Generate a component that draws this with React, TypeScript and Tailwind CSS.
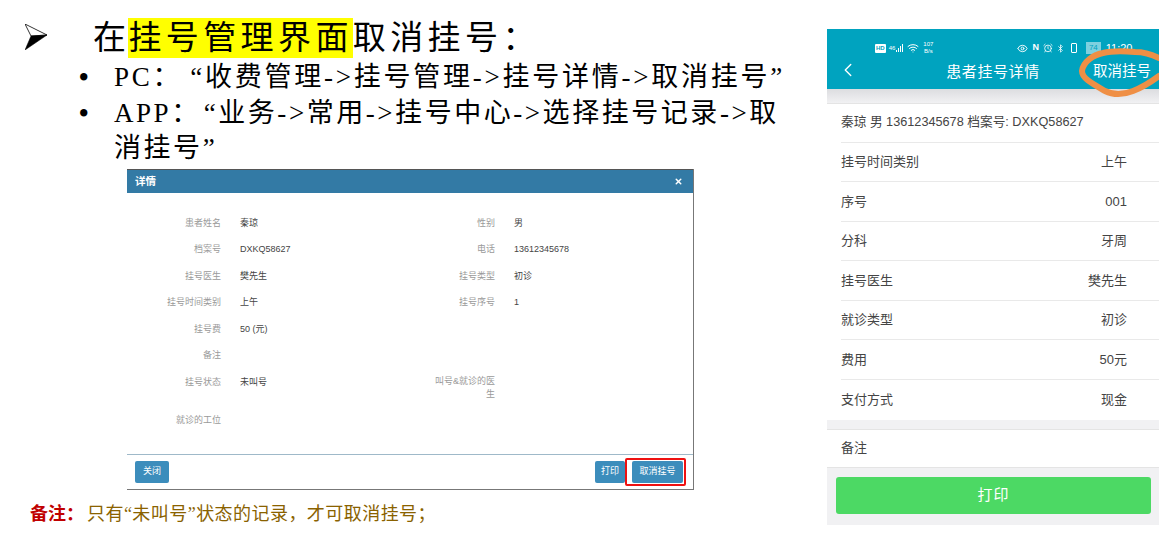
import React from 'react';
import { ChevronLeft, Wifi, Eye, AlarmClock, Bluetooth, X } from 'lucide-react';

const cjk = "font-['Liberation_Serif','Noto_Sans_CJK_SC',serif]";

const leftRows = [
  ['患者姓名', '秦琼'],
  ['档案号', 'DXKQ58627'],
  ['挂号医生', '樊先生'],
  ['挂号时间类别', '上午'],
  ['挂号费', '50 (元)'],
  ['备注', ''],
  ['挂号状态', '未叫号'],
  ['就诊的工位', ''],
];

const rightRows = [
  ['性别', '男'],
  ['电话', '13612345678'],
  ['挂号类型', '初诊'],
  ['挂号序号', '1'],
];

const phoneRows = [
  ['挂号时间类别', '上午'],
  ['序号', '001'],
  ['分科', '牙周'],
  ['挂号医生', '樊先生'],
  ['就诊类型', '初诊'],
  ['费用', '50元'],
  ['支付方式', '现金'],
];

const DialogRow = ({ label, value }: { label: string; value: string }) => (
  <div className="flex h-[26.5px] items-center">
    <div className="w-[94px] text-right text-[#9a9a9a]">{label}</div>
    <div className="ml-[19px] text-[#444]">{value}</div>
  </div>
);

const App = () => {
  return (
    <div className="relative flex h-[536px] w-[1159px] overflow-hidden bg-white font-['Liberation_Sans','Noto_Sans_CJK_SC',sans-serif]">
      {/* Slide text and desktop dialog */}
      <div className="w-[827px] shrink-0">
        <div className={`flex h-[58px] items-end pl-[25px] text-[33px] leading-[40px] tracking-[4.4px] text-black ${cjk}`}>
          <svg width="22" height="26" viewBox="0 0 22 26" className="mb-[8px] shrink-0">
            <path d="M0 0 L22 11 L6 12 Z" fill="#fff" stroke="#000" strokeWidth="0.8" />
            <path d="M0 26 L6 12 L22 11 Z" fill="#000" stroke="#000" strokeWidth="0.5" />
          </svg>
          <span className="ml-[46px] tracking-[2.4px]">在</span>
          <span className="bg-[#ffff00]">挂号管理界面</span>
          <span>取消挂号：</span>
        </div>

        <ul className={`ml-[79px] mt-[2px] w-[705px] text-[27px] leading-[35.5px] text-black ${cjk}`}>
          <li className="flex">
            <span className="w-[35px] shrink-0 font-bold">•</span>
            <span className="whitespace-nowrap tracking-[2.75px]"><span className="pr-[8px]">PC：</span>“收费管理-&gt;挂号管理-&gt;挂号详情-&gt;取消挂号”</span>
          </li>
          <li className="flex">
            <span className="w-[35px] shrink-0 font-bold">•</span>
            <div className="whitespace-nowrap tracking-[2.55px]">
              <div><span className="pr-[3px]">APP：</span>“业务-&gt;常用-&gt;挂号中心-&gt;选择挂号记录-&gt;取</div>
              <div>消挂号”</div>
            </div>
          </li>
        </ul>

        <div className="ml-[127px] mt-[2.5px] flex h-[321px] w-[567px] flex-col border-r border-b border-[#777] text-[9px]">
          <div className="flex h-[24px] items-center justify-between border-t border-[#555] bg-[#337aa5] pl-[8px] pr-[10px] text-[10.5px] font-bold text-white">
            <span>详情</span>
            <X size={9} strokeWidth={4} />
          </div>

          <div className="flex flex-1 pt-[17px]">
            <div className="w-[274px]">
              {leftRows.slice(0, 7).map(([label, value]) => (
                <DialogRow key={label} label={label} value={value} />
              ))}
              <div className="mt-[12px]">
                <DialogRow label={leftRows[7][0]} value={leftRows[7][1]} />
              </div>
            </div>
            <div className="flex-1">
              {rightRows.map(([label, value]) => (
                <DialogRow key={label} label={label} value={value} />
              ))}
              <div className="ml-[29px] mt-[59px] w-[65px] text-right leading-[13px] text-[#9a9a9a]">叫号&amp;就诊的医生</div>
            </div>
          </div>

          <div className="flex h-[35px] items-center justify-between border-t border-[#9fb9c9] pl-[8px] pr-[7px] text-white">
            <button className="h-[22px] w-[34px] rounded-[2px] bg-[#3c8dbc]">关闭</button>
            <div className="flex items-center">
              <button className="h-[22px] w-[30px] rounded-[2px] bg-[#3c8dbc]">打印</button>
              <div className="rounded-[2px] border-2 border-[#ee1111] py-[1px] pl-[5px] pr-[1px]">
                <button className="block h-[22px] w-[51px] rounded-[2px] bg-[#3c8dbc]">取消挂号</button>
              </div>
            </div>
          </div>
        </div>

        <div className={`ml-[30px] mt-[12px] text-[18px] leading-[24px] text-[#8a6200] ${cjk}`}>
          <span className="font-bold text-[#c00000]">备注：</span>
          <span className="ml-[3px] tracking-[0.45px]">只有“未叫号”状态的记录，才可取消挂号；</span>
        </div>
      </div>

      {/* Phone screenshot */}
      <div className="w-[332px] shrink-0 pt-[29px]">
        <div className="flex h-[496px] flex-col bg-[#f1f1f3] text-[13px] text-[#444]">
          <div className="relative h-[60px] bg-[#00a3bf] text-white">
            <div className="flex h-[26px] items-center pl-[48px] pt-[12px] text-[6px]">
              <span className="rounded-[1px] bg-white px-[1px] font-bold text-[#00a3bf]">HD</span>
              <span className="ml-[3px]">46</span>
              <span className="ml-[1px] flex items-end gap-[1px]">
                <span className="h-[2px] w-[1px] bg-white" />
                <span className="h-[4px] w-[1px] bg-white" />
                <span className="h-[6px] w-[1px] bg-white" />
                <span className="h-[8px] w-[1px] bg-white" />
              </span>
              <Wifi size={12} className="ml-[4px]" />
              <span className="ml-[4px] text-center leading-[7px]">107<br />B/s</span>
              <Eye size={11} className="ml-[84px]" />
              <span className="ml-[4px] text-[9px] font-bold">N</span>
              <AlarmClock size={10} className="ml-[4px]" />
              <Bluetooth size={9} className="ml-[3px]" />
              <span className="ml-[6px] h-[10px] w-[6px] rounded-[1px] border border-white" />
              <span className="ml-[9px] bg-[#7fd0df] px-[3px] text-[8px] text-[#00a3bf]">74</span>
              <span className="ml-[5px] text-[11px]">11:20</span>
            </div>
            <div className="relative flex h-[34px] items-center justify-center text-[15px] tracking-[0.6px]">
              <ChevronLeft size={22} strokeWidth={1.5} className="absolute left-[10px] top-[4px]" />
              <span>患者挂号详情</span>
              <span className="absolute right-[8px] text-[14.5px] tracking-normal">取消挂号</span>
            </div>
          </div>

          <div className="h-[14px] bg-gradient-to-b from-[#dcdde0] to-[#f1f1f3]" />

          <div className="border-t border-[#e4e4e4] bg-white pl-[14px]">
            <div className="flex h-[38.5px] items-center border-b border-[#e9e9e9] text-[12.7px]">
              秦琼 男 13612345678 档案号: DXKQ58627
            </div>
            {phoneRows.map(([label, value], i) => (
              <div
                key={label}
                className={`flex h-[39.6px] items-center justify-between pr-[32px] ${i < phoneRows.length - 1 ? 'border-b border-[#e9e9e9]' : ''}`}
              >
                <span>{label}</span>
                <span>{value}</span>
              </div>
            ))}
          </div>

          <div className="mt-[9px] flex h-[39px] items-center border-y border-[#e4e4e4] bg-white pl-[14px]">备注</div>

          <div className="ml-[9px] mr-[8px] mt-[9px] flex h-[37px] items-center justify-center rounded-[3px] bg-[#4cd964] text-[15px] tracking-[1px] text-white">
            打印
          </div>
        </div>
      </div>

      {/* Hand drawn circle over the cancel action */}
      <svg className="absolute left-[1075px] top-[42px]" width="84" height="56" viewBox="0 0 84 56" fill="none">
        <path
          d="M84 16 C76 12 70 10 60 10 C48 9 36 9 28 11 C18 13 8 20 7 29 C7 36 16 41 30 49 C38 53 48 53 58 49 C66 46 76 40 84 34"
          stroke="#ef8f45"
          strokeWidth="6"
          strokeLinecap="round"
        />
      </svg>
    </div>
  );
};

export default App;
